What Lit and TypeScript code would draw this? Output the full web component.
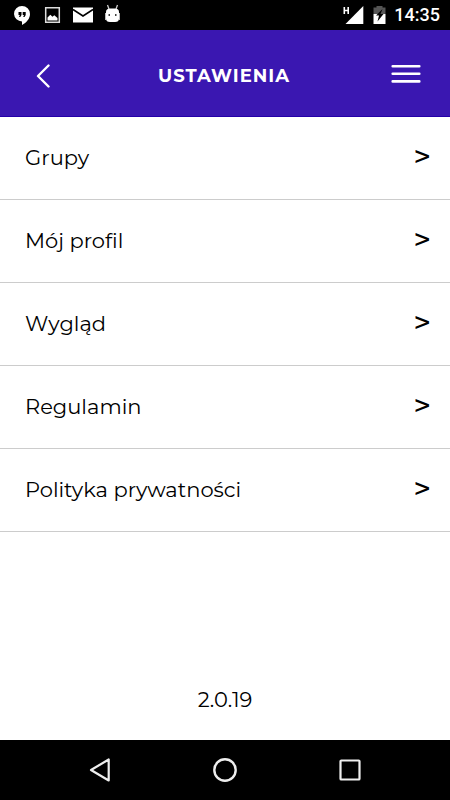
import { LitElement, html, css } from "lit";
import { customElement, property } from "lit/decorators.js";

const focusReset = css`
  button {
    appearance: none;
    border: 0;
    margin: 0;
    padding: 0;
    background: none;
    color: inherit;
    font: inherit;
    cursor: pointer;
  }
  svg {
    display: block;
  }
`;

@customElement("status-bar")
class StatusBar extends LitElement {
  static styles = css`
    :host {
      display: flex;
      align-items: center;
      justify-content: space-between;
      height: 30px;
      padding: 0 10px 0 12px;
      background: #000;
      color: #fff;
    }
    .group {
      display: flex;
      align-items: center;
      gap: 8px;
    }
    svg {
      display: block;
    }
    .clock {
      font: 500 18px/32px Roboto, sans-serif;
    }
  `;

  render() {
    return html`
      <div class="group">
        <svg width="20" height="30" viewBox="12 0 20 30" aria-hidden="true">
          <path fill="#fff" d="M22 6a8 8 0 0 0-8 8 8 8 0 0 0 8 7.500V25c4.500-2.200 8-6.500 8-11a8 8 0 0 0-8-8z" />
          <path d="M18.500 12h3v3l-1.200 2h-1.300l.8-2h-1.300zM22.700 12h3v3l-1.200 2h-1.300l.8-2h-1.300z" />
        </svg>
        <svg width="24" height="30" viewBox="40 0 24 30" aria-hidden="true">
          <path fill="none" stroke="#ddd" stroke-width="1.500" d="M45.700 7.700h13.600v14.600H45.700z" />
          <path fill="#fff" d="M47.500 20.500v-3l2.800-2.800 2.200 2 1.800-1.500 3.200 2.800v2.500z" />
        </svg>
        <svg width="22" height="30" viewBox="72 0 22 30" aria-hidden="true">
          <path fill="#fff" d="M73 7.500h20v15H73z" />
          <path fill="none" stroke="#000" stroke-width="1.500" d="M73 9.500l10 6.500 10-6.500" />
        </svg>
        <svg width="20" height="30" viewBox="102 0 20 30" aria-hidden="true">
          <path fill="none" stroke="#ccc" stroke-width="1.300" d="M107.500 5l1.500 4M117.500 5l-1.500 4" />
          <path fill="#fff" d="M106 12q0-3.500 4-3.500h5q4 0 4 3.500v6.500q0 3.500-4 3.500h-5q-4 0-4-3.500z" />
          <path fill="#bbb" d="M105 13h1v7h-1zM119 13h1v7h-1z" />
          <path d="M108.500 14.200h1.500v1.500h-1.500zM115 14.200h1.500v1.500H115z" />
        </svg>
      </div>
      <div class="group">
        <svg width="44" height="30" viewBox="343 0 44 30" aria-hidden="true">
          <path fill="none" stroke="#fff" stroke-width="1.600" d="M345.300 7v7M349.200 7v7M345.300 10.500h4" />
          <path fill="#fff" d="M364.300 6v18H346.500z" />
          <path fill="#555" d="M374.500 7.500h3V6h6v1.500h3V14h-12z" />
          <path fill="#fff" d="M374.500 14h12v10h-12z" />
          <path d="M383.500 9l-6.500 6.500h3L378.500 21.500l6-7.500h-3z" />
        </svg>
        <time class="clock">14:35</time>
      </div>
    `;
  }
}

@customElement("title-bar")
class TitleBar extends LitElement {
  @property() heading = "";

  static styles = [
    focusReset,
    css`
      :host {
        display: grid;
        grid-template-columns: 86px 1fr 88px;
        align-items: center;
        box-sizing: border-box;
        height: 87px;
        padding-top: 6px;
        border-bottom: 1px solid #2400a8;
        background: #3a17b1;
        color: #fff;
      }
      h1 {
        margin: 0;
        text-align: center;
        text-transform: uppercase;
        letter-spacing: 1px;
        font: 700 18px/24px Montserrat, Inter, sans-serif;
      }
      button {
        display: grid;
        place-items: center;
        height: 48px;
      }
    `,
  ];

  render() {
    return html`
      <button aria-label="Wstecz">
        <svg width="14" height="24" viewBox="0 0 14 24">
          <path fill="none" stroke="#fff" stroke-width="2.400" stroke-linecap="round" stroke-linejoin="round" d="M12.500 1.500L2 12l10.500 10.500" />
        </svg>
      </button>
      <h1>${this.heading}</h1>
      <button aria-label="Menu">
        <svg width="30" height="24" viewBox="0 0 30 24">
          <path fill="none" stroke="#fff" stroke-width="2.600" stroke-linecap="round" d="M1.700 2.200h26.600M1.700 9.800h26.600M1.700 17.400h26.600" />
        </svg>
      </button>
    `;
  }
}

@customElement("nav-bar")
class NavBar extends LitElement {
  static styles = [
    focusReset,
    css`
      :host {
        display: flex;
        justify-content: center;
        gap: 77px;
        height: 60px;
        background: #000;
      }
      button {
        display: grid;
        place-items: center;
        width: 48px;
      }
    `,
  ];

  render() {
    return html`
      <button aria-label="Wróć">
        <svg width="26" height="26" viewBox="0 0 26 26">
          <path fill="none" stroke="#eee" stroke-width="2.200" stroke-linejoin="round" d="M21.700 2.500v21L4 13z" />
        </svg>
      </button>
      <button aria-label="Ekran główny">
        <svg width="26" height="26" viewBox="0 0 26 26">
          <circle cx="13" cy="13" r="10.700" fill="none" stroke="#eee" stroke-width="2.400" />
        </svg>
      </button>
      <button aria-label="Ostatnie">
        <svg width="26" height="26" viewBox="0 0 26 26">
          <rect x="3.500" y="3.500" width="19" height="19" rx="0.800" fill="none" stroke="#eee" stroke-width="2.200" />
        </svg>
      </button>
    `;
  }
}

@customElement("app-root")
class AppRoot extends LitElement {
  private items = ["Grupy", "Mój profil", "Wygląd", "Regulamin", "Polityka prywatności"];

  static styles = css`
    :host {
      display: flex;
      flex-direction: column;
      min-height: 100vh;
      background: #fff;
      color: #000;
      font: 400 21px/28px Montserrat, Inter, sans-serif;
      font-variant-ligatures: none;
    }
    main {
      flex: 1;
      display: flex;
      flex-direction: column;
    }
    ul {
      list-style: none;
      margin: 0;
      padding: 0;
    }
    .row {
      display: flex;
      align-items: center;
      justify-content: space-between;
      box-sizing: border-box;
      height: 83px;
      padding: 0 19px 0 25px;
      border-bottom: 1px solid #ccc;
      color: inherit;
      text-decoration: none;
    }
    .arrow {
      padding-bottom: 2px;
      font-weight: 500;
      font-size: 30px;
    }
    .version {
      margin: auto 0 0;
      padding: 24px;
      text-align: center;
      line-height: 32px;
    }
  `;

  render() {
    return html`
      <status-bar></status-bar>
      <title-bar heading="Ustawienia"></title-bar>
      <main>
        <ul>
          ${this.items.map(
            (label) => html`<li>
              <a class="row" href="#"><span>${label}</span><span class="arrow" aria-hidden="true">&gt;</span></a>
            </li>`
          )}
        </ul>
        <p class="version">2.0.19</p>
      </main>
      <nav-bar></nav-bar>
    `;
  }
}
